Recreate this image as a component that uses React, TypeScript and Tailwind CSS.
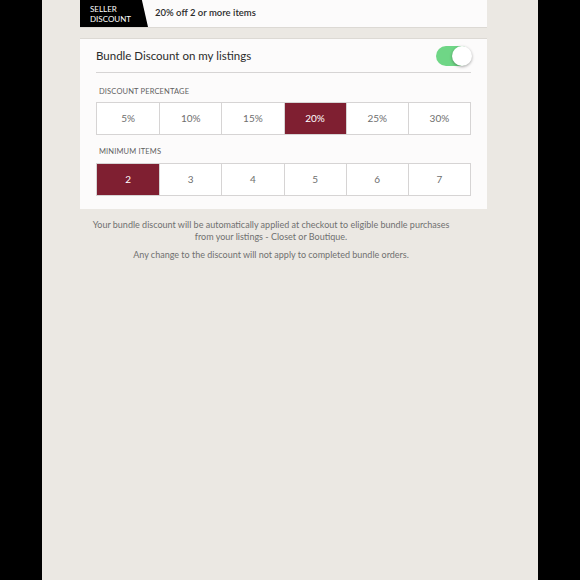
import React from 'react';

const percentages = ['5%', '10%', '15%', '20%', '25%', '30%'];
const minItems = ['2', '3', '4', '5', '6', '7'];

const Segments: React.FC<{ options: string[]; selected: string }> = ({ options, selected }) => (
  <div className="grid grid-cols-6 border border-[#d6d4d4] bg-white">
    {options.map((opt, i) => (
      <div
        key={opt}
        className={`h-[31px] flex items-center justify-center text-[10px] ${
          i > 0 ? 'border-l border-[#d6d4d4]' : ''
        } ${opt === selected ? 'bg-[#7f1f31] text-white' : 'text-[#6e6e6e]'}`}
      >
        {opt}
      </div>
    ))}
  </div>
);

const App: React.FC = () => {
  return (
    <div className="w-[580px] h-[580px] bg-black flex justify-center font-['Lato',sans-serif]">
      <div className="w-[496px] h-full bg-[#ebe8e3] pl-[38px]">
        {/* seller discount banner */}
        <div className="w-[407px] h-[28px] bg-[#fcfbfb] flex items-center border-b border-[#dcd9d4]">
          <div className="h-full w-[68px] bg-black text-white text-[8px] leading-[10px] uppercase pl-[10px] flex flex-col justify-center [clip-path:polygon(0_0,91%_0,100%_100%,0_100%)]">
            <span>Seller</span>
            <span>Discount</span>
          </div>
          <span className="ml-[7px] text-[9.5px] font-semibold text-[#2b2b2b]">20% off 2 or more items</span>
        </div>

        {/* bundle card */}
        <div className="mt-[10px] w-[407px] bg-[#fcfbfb] border-t border-[#dcd9d4] px-[16px] pb-[13px]">
          <div className="h-[34px] flex items-center justify-between border-b border-[#d6d4d4]">
            <span className="text-[11.5px] text-[#2b2b2b]">Bundle Discount on my listings</span>
            <div className="relative w-[35px] h-[20px] rounded-full bg-[#6fd686]">
              <div className="absolute right-[-1px] top-[0px] w-[20px] h-[20px] rounded-full bg-white shadow-[0_1px_3px_rgba(0,0,0,0.35)]" />
            </div>
          </div>

          <div className="pt-[13px] pl-[3px] text-[7.5px] uppercase tracking-[0.02em] text-[#5f5f5f]">Discount Percentage</div>
          <div className="mt-[5px]">
            <Segments options={percentages} selected="20%" />
          </div>

          <div className="pt-[11px] pl-[3px] text-[7.5px] uppercase tracking-[0.02em] text-[#5f5f5f]">Minimum Items</div>
          <div className="mt-[5px]">
            <Segments options={minItems} selected="2" />
          </div>
        </div>

        {/* notes */}
        <div className="w-[382px] px-[8px] mt-[10px] text-center text-[9px] text-[#707070]">
          <p className="leading-[12px]">
            Your bundle discount will be automatically applied at checkout to eligible bundle purchases from your
            listings - Closet or Boutique.
          </p>
          <p className="leading-[12px] mt-[6px]">Any change to the discount will not apply to completed bundle orders.</p>
        </div>
      </div>
    </div>
  );
};

export default App;
